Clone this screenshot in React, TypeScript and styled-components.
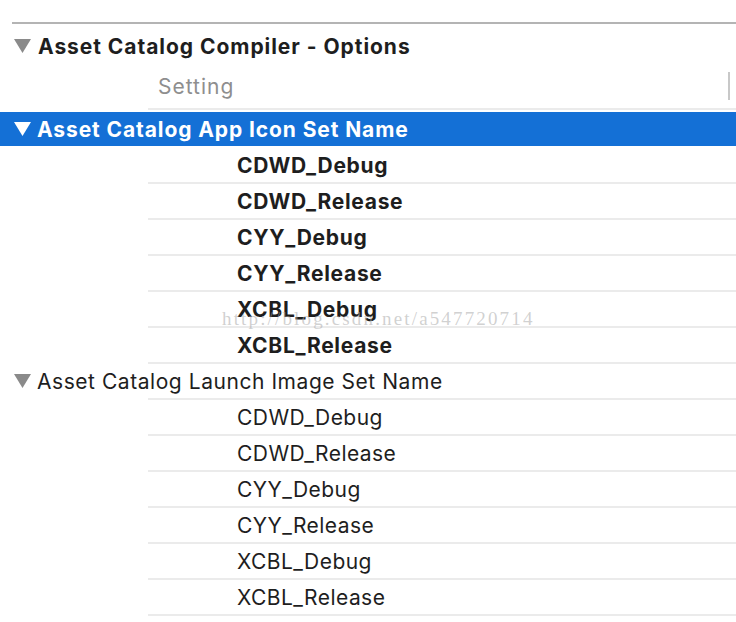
import React from "react";
import styled, { createGlobalStyle } from "styled-components";

const GlobalStyle = createGlobalStyle`
  body {
    margin: 0;
    background: #ffffff;
    font-family: Inter, "Liberation Sans", sans-serif;
  }
`;

const iconSets = ["CDWD_Debug", "CDWD_Release", "CYY_Debug", "CYY_Release", "XCBL_Debug", "XCBL_Release"];

function Triangle({ color }: { color: string }) {
  return (
    <svg width="17" height="14" viewBox="0 0 17 14">
      <polygon points="0,0 17,0 8.5,14" fill={color} />
    </svg>
  );
}

function App() {
  return (
    <>
      <GlobalStyle />
      <Page>
        <TopRule />
        <SectionTitle>
          <Triangle color="#8a8a8a" />
          Asset Catalog Compiler - Options
        </SectionTitle>
        <ColumnHead>
          <span>Setting</span>
          <Divider />
        </ColumnHead>

        {/* 선택된 그룹 */}
        <GroupRow selected>
          <Triangle color="#ffffff" />
          Asset Catalog App Icon Set Name
        </GroupRow>
        {iconSets.map((name) => (
          <ValueRow key={name} bold>
            {name}
          </ValueRow>
        ))}

        <GroupRow>
          <Triangle color="#8a8a8a" />
          Asset Catalog Launch Image Set Name
        </GroupRow>
        {iconSets.map((name) => (
          <ValueRow key={name}>{name}</ValueRow>
        ))}

        <Watermark>http://blog.csdn.net/a547720714</Watermark>
      </Page>
    </>
  );
}

export default App;

const rowLine = `
  background-image: linear-gradient(#ebebeb, #ebebeb);
  background-repeat: no-repeat;
  background-position: 148px 100%;
  background-size: calc(100% - 148px) 2px;
`;

const Page = styled.div`
  position: relative;
  padding-top: 22px;
  width: 736px;
  height: 622px;
  box-sizing: border-box;
  overflow: hidden;
`;

const TopRule = styled.div`
  height: 2px;
  margin-left: 12px;
  background: #b4b4b4;
`;

const SectionTitle = styled.div`
  display: flex;
  align-items: center;
  gap: 7px;
  height: 44px;
  padding-left: 14px;
  font-size: 21px;
  font-weight: 700;
  color: #1e1e1e;
  letter-spacing: 0.95px;
`;

const ColumnHead = styled.div`
  display: flex;
  align-items: center;
  justify-content: space-between;
  height: 42px;
  box-sizing: border-box;
  padding: 0 6px 6px 158px;
  font-size: 21px;
  letter-spacing: 1px;
  color: #8e8e8e;
  ${rowLine}
`;

const Divider = styled.div`
  width: 2px;
  height: 28px;
  background: #c8c8c8;
`;

const GroupRow = styled.div<{ selected?: boolean }>`
  display: flex;
  align-items: center;
  gap: 6px;
  height: 36px;
  box-sizing: border-box;
  padding-left: 14px;
  padding-bottom: ${(p) => (p.selected ? "0" : "2px")};
  font-size: 21px;
  letter-spacing: ${(p) => (p.selected ? "0.9px" : "0.55px")};
  font-weight: ${(p) => (p.selected ? 700 : 400)};
  color: ${(p) => (p.selected ? "#ffffff" : "#1e1e1e")};
  ${(p) => (p.selected ? "background: #1470d6; height: 34px; margin: 2px 0;" : rowLine)}
`;

const ValueRow = styled.div<{ bold?: boolean }>`
  display: flex;
  align-items: center;
  height: 36px;
  padding-left: 237px;
  padding-bottom: 2px;
  box-sizing: border-box;
  font-size: 21px;
  letter-spacing: ${(p) => (p.bold ? "0.7px" : "0.45px")};
  font-weight: ${(p) => (p.bold ? 700 : 400)};
  color: #1e1e1e;
  ${rowLine}
`;

const Watermark = styled.div`
  position: absolute;
  left: 222px;
  top: 308px;
  font-family: "Liberation Serif", serif;
  font-size: 19px;
  letter-spacing: 2.15px;
  color: rgba(170, 170, 170, 0.55);
  pointer-events: none;
`;
